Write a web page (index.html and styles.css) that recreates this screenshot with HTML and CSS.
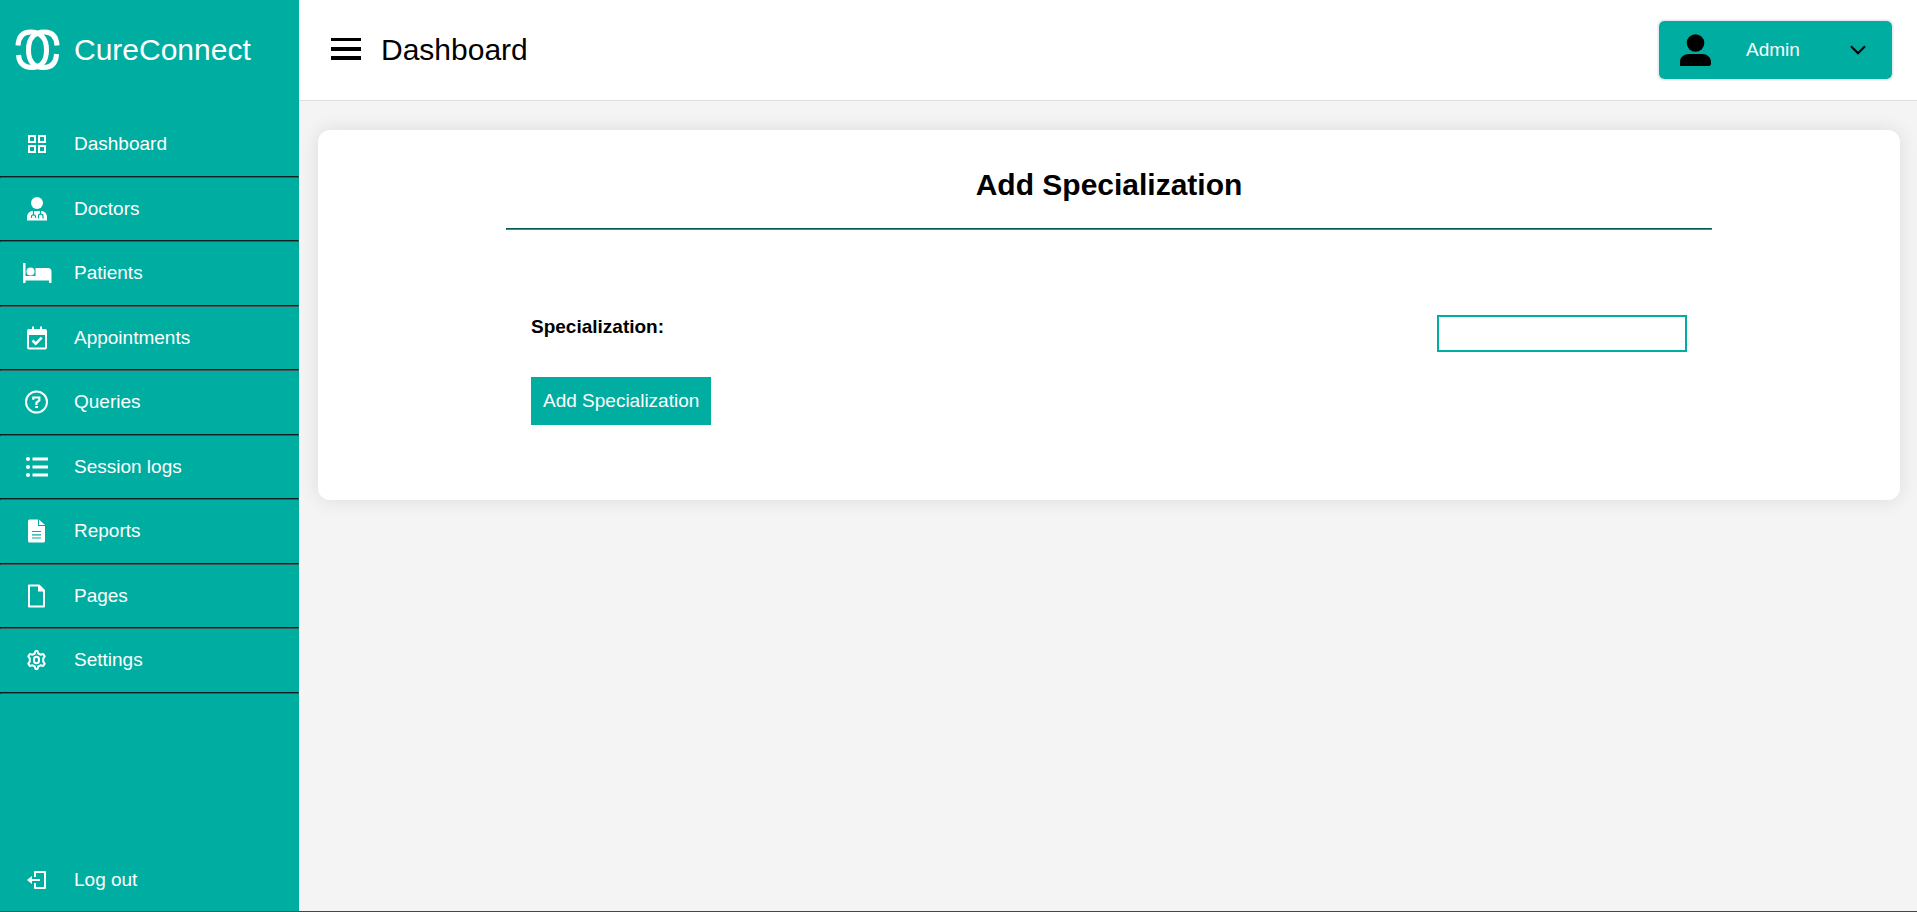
FILE: index.html
```html
<!DOCTYPE html>
<html lang="en">
<head>
<meta charset="utf-8">
<title>CureConnect - Add Specialization</title>
<link rel="stylesheet" href="styles.css">
</head>
<body>
<div class="app">
  <aside class="sidebar">
    <a class="brand" href="#">
      <svg class="brand-logo" viewBox="0 0 44 42" fill="none" stroke="#fff" stroke-width="5">
        <path d="M2.500 16.500C3 8 7 3 15 3C26 3 31 10 31 21C31 32 26 38.500 16 38.500C8 38.500 3.500 34 3 26"/>
        <path d="M41.500 16.500C41 8 37 3 29 3C18 3 13 10 13 21C13 32 18 38.500 28 38.500C36 38.500 40.500 34 41 25"/>
      </svg>
      <span class="brand-name">CureConnect</span>
    </a>
    <nav class="menu">
      <a class="menu-item" href="#">
        <svg class="icon" viewBox="0 0 24 24" fill="none" stroke="currentColor" stroke-width="2"><path d="M4 4h6v6H4zM14 4h6v6h-6zM4 14h6v6H4zM14 14h6v6h-6z"/></svg>
        <span>Dashboard</span>
      </a>
      <hr class="rule">
      <a class="menu-item" href="#">
        <svg class="icon" viewBox="0 0 24 24"><circle cx="12" cy="6" r="6" fill="currentColor"/><path fill="currentColor" d="M2 23.500v-3c0-4 2.500-6.500 6-6.500h8c3.500 0 6 2.500 6 6.500v3z"/><path fill="none" stroke="#00ada1" stroke-width="1.200" d="M8.500 14v4M6.500 21v-2c0-1.500 4-1.500 4 0v2M15.500 14v3M13.500 21.500v-2.500c0-2.500 4.500-2.500 4.500 0v2.500"/></svg>
        <span>Doctors</span>
      </a>
      <hr class="rule">
      <a class="menu-item" href="#">
        <svg class="icon icon-wide" viewBox="0 0 30 20" fill="currentColor"><path d="M1 0h2.500v13h10V5h12.500a3.500 3.500 0 0 1 3.500 3.500V20H27v-2.500H3.500V20H1z"/><circle cx="8.500" cy="8.500" r="4"/></svg>
        <span>Patients</span>
      </a>
      <hr class="rule">
      <a class="menu-item" href="#">
        <svg class="icon" viewBox="0 0 24 24"><path fill="currentColor" fill-rule="evenodd" d="M7 .500h2V3h6V.500h2V3h3a2 2 0 0 1 2 2v16.500a2 2 0 0 1-2 2H4a2 2 0 0 1-2-2V5a2 2 0 0 1 2-2h3zM4 9v12.500h16V9z"/><path fill="none" stroke="currentColor" stroke-width="2.500" d="M7.500 14.500l3.200 3.200 6-6"/></svg>
        <span>Appointments</span>
      </a>
      <hr class="rule">
      <a class="menu-item" href="#">
        <svg class="icon" viewBox="0 0 24 24" fill="none" stroke="currentColor"><circle cx="11.500" cy="12" r="10.500" stroke-width="2"/><path stroke-width="2.200" d="M8.300 9.700V7.500h6v3l-2.800 2v2.500"/><path fill="currentColor" stroke="none" d="M10.200 16H13v2h-2.800z"/></svg>
        <span>Queries</span>
      </a>
      <hr class="rule">
      <a class="menu-item" href="#">
        <svg class="icon" viewBox="0 0 24 24" fill="currentColor"><path d="M7.500 2.500H23v3H7.500zM7.500 10.500H23v3H7.500zM7.500 18.500H23v3H7.500z"/><circle cx="3" cy="4" r="2.100"/><circle cx="3" cy="12" r="2.100"/><circle cx="3" cy="20" r="2.100"/></svg>
        <span>Session logs</span>
      </a>
      <hr class="rule">
      <a class="menu-item" href="#">
        <svg class="icon" viewBox="0 0 24 24"><path fill="currentColor" d="M4.500.500H13V7h7v15a1.500 1.500 0 0 1-1.500 1.500h-14A1.500 1.500 0 0 1 3 22V2A1.500 1.500 0 0 1 4.500.500zM14 .500L20 6h-6z"/><path stroke="#00ada1" stroke-width="1.200" d="M7 12.500h9M7 15.800h9M7 19h9"/></svg>
        <span>Reports</span>
      </a>
      <hr class="rule">
      <a class="menu-item" href="#">
        <svg class="icon" viewBox="0 0 24 24"><path fill="none" stroke="currentColor" stroke-width="2" stroke-linejoin="round" d="M4 1.500h10l5 5v16H4z"/><path fill="currentColor" d="M13 1v6.500h6.500z"/></svg>
        <span>Pages</span>
      </a>
      <hr class="rule">
      <a class="menu-item" href="#">
        <svg class="icon" viewBox="0 0 24 24" fill="none" stroke="currentColor" stroke-width="2" stroke-linejoin="round"><path d="M9.800 5.500L10.500 3h2l.700 2.500 2.300 1.200 2.700-.700 1.500 2.400-1.500 2v3.200l1.500 2-1.500 2.400-2.700-.700-2.300 1.200-.700 2.500h-2l-.700-2.500-2.300-1.200-2.700.700-1.500-2.400 1.500-2v-3.200l-1.500-2L4.800 6l2.700.700z"/><ellipse cx="11.500" cy="12" rx="2.600" ry="3.200"/></svg>
        <span>Settings</span>
      </a>
      <hr class="rule">
    </nav>
    <a class="menu-item logout" href="#">
      <svg class="icon" viewBox="0 0 24 24"><path fill="none" stroke="currentColor" stroke-width="2" stroke-linejoin="round" d="M10 9V4h10v16H10v-5M6.500 12h8.500"/><path fill="currentColor" d="M2 12l5-4v8z"/></svg>
      <span>Log out</span>
    </a>
  </aside>
  <div class="content">
    <header class="topbar">
      <button class="menu-toggle" type="button" aria-label="Toggle menu">
        <svg class="bars" viewBox="0 0 30 22"><path d="M0 0h30v3H0zM0 9h30v4H0zM0 18h30v4H0z"/></svg>
      </button>
      <h1 class="page-title">Dashboard</h1>
      <button class="profile" type="button">
        <svg class="avatar" viewBox="0 0 32 32"><circle cx="15.500" cy="9" r="8.800"/><path d="M0 32v-4c0-5 4-8 9-8h13c5 0 9 3 9 8v1.500a2.500 2.500 0 0 1-2.500 2.500z"/></svg>
        <span class="profile-name">Admin</span>
        <svg class="chevron" viewBox="0 0 16 10" fill="none" stroke="#000" stroke-width="2.200"><path d="M1 1.200l7 7 7-7"/></svg>
      </button>
    </header>
    <main class="main">
      <section class="card">
        <h2 class="card-title">Add Specialization</h2>
        <hr class="card-rule">
        <form class="form">
          <div class="field">
            <label class="label" for="specialization">Specialization:</label>
            <input class="input" id="specialization" name="specialization" type="text">
          </div>
          <button class="submit" type="submit">Add Specialization</button>
        </form>
      </section>
    </main>
  </div>
</div>
</body>
</html>
```
FILE: styles.css
```css
* {
  box-sizing: border-box;
  margin: 0;
  padding: 0;
}

body {
  font-family: "Liberation Sans", Arial, sans-serif;
  font-size: 19px;
  line-height: 1.5;
  color: #000;
  background: #f4f4f4;
}

button,
input {
  font: inherit;
}

a {
  color: inherit;
  text-decoration: none;
}

.app {
  display: flex;
  min-height: 100vh;
  border-bottom: 1px solid #454545;
}

.sidebar {
  display: flex;
  flex-direction: column;
  flex: 0 0 299px;
  color: #fff;
  background: #00ada1;
}

.brand {
  display: flex;
  align-items: center;
  gap: 14px;
  height: 99px;
  padding-left: 15px;
  margin-bottom: 14px;
}

.brand-logo {
  width: 45px;
  height: 42px;
}

.brand-name,
.page-title {
  font-size: 30px;
  font-weight: 400;
}

.menu-item {
  display: flex;
  align-items: center;
  gap: 13px;
  padding: 17px 0;
}

.icon {
  flex: none;
  width: 24px;
  height: 24px;
  margin: 0 12px 0 25px;
}

.icon-wide {
  width: 30px;
  margin: 0 9px 0 22px;
}

.rule {
  border: 1px solid;
  border-color: #0b1f1e #3c5b58 #3c5b58 #0b1f1e;
}

.logout {
  margin-top: auto;
}

.content {
  flex: 1;
  min-width: 0;
}

.topbar {
  display: flex;
  align-items: center;
  height: 101px;
  padding: 0 24px 2px 32px;
  background: #fff;
  border-bottom: 1px solid #dedede;
}

.menu-toggle {
  display: flex;
  margin-right: 20px;
  background: none;
  border: 0;
}

.bars {
  width: 30px;
  height: 22px;
}

.profile {
  display: flex;
  align-items: center;
  gap: 34px;
  width: 235px;
  height: 60px;
  padding: 0 26px 0 21px;
  margin: 2px 0 0 auto;
  color: #fff;
  background: #00ada1 padding-box;
  border: 1px solid #e8eaed;
  border-radius: 6px;
  box-shadow: 0 0 0 1px #f0f1f3;
}

.avatar {
  width: 32px;
  height: 32px;
}

.chevron {
  width: 16px;
  height: 10px;
  margin-left: auto;
}

.main {
  padding: 29px 17px 29px 19px;
}

.card {
  padding: 32px 188px 75px;
  background: #fff;
  border-radius: 12px;
  box-shadow: 0 0 20px rgba(0, 0, 0, 0.1);
}

.card-title {
  font-size: 30px;
  text-align: center;
}

.card-rule {
  margin-top: 21px;
  border: 1px inset #00ada1;
}

.form {
  padding: 85px 25px 0;
}

.field {
  display: flex;
  align-items: flex-start;
  justify-content: space-between;
  margin-bottom: 25px;
}

.label {
  font-weight: 700;
  line-height: 24px;
}

.input {
  width: 250px;
  height: 37px;
  padding: 0 6px;
  border: 2px solid #00ada1;
  outline: 0;
}

.submit {
  height: 48px;
  padding: 0 12px;
  color: #fff;
  background: #00ada1;
  border: 0;
}
```
